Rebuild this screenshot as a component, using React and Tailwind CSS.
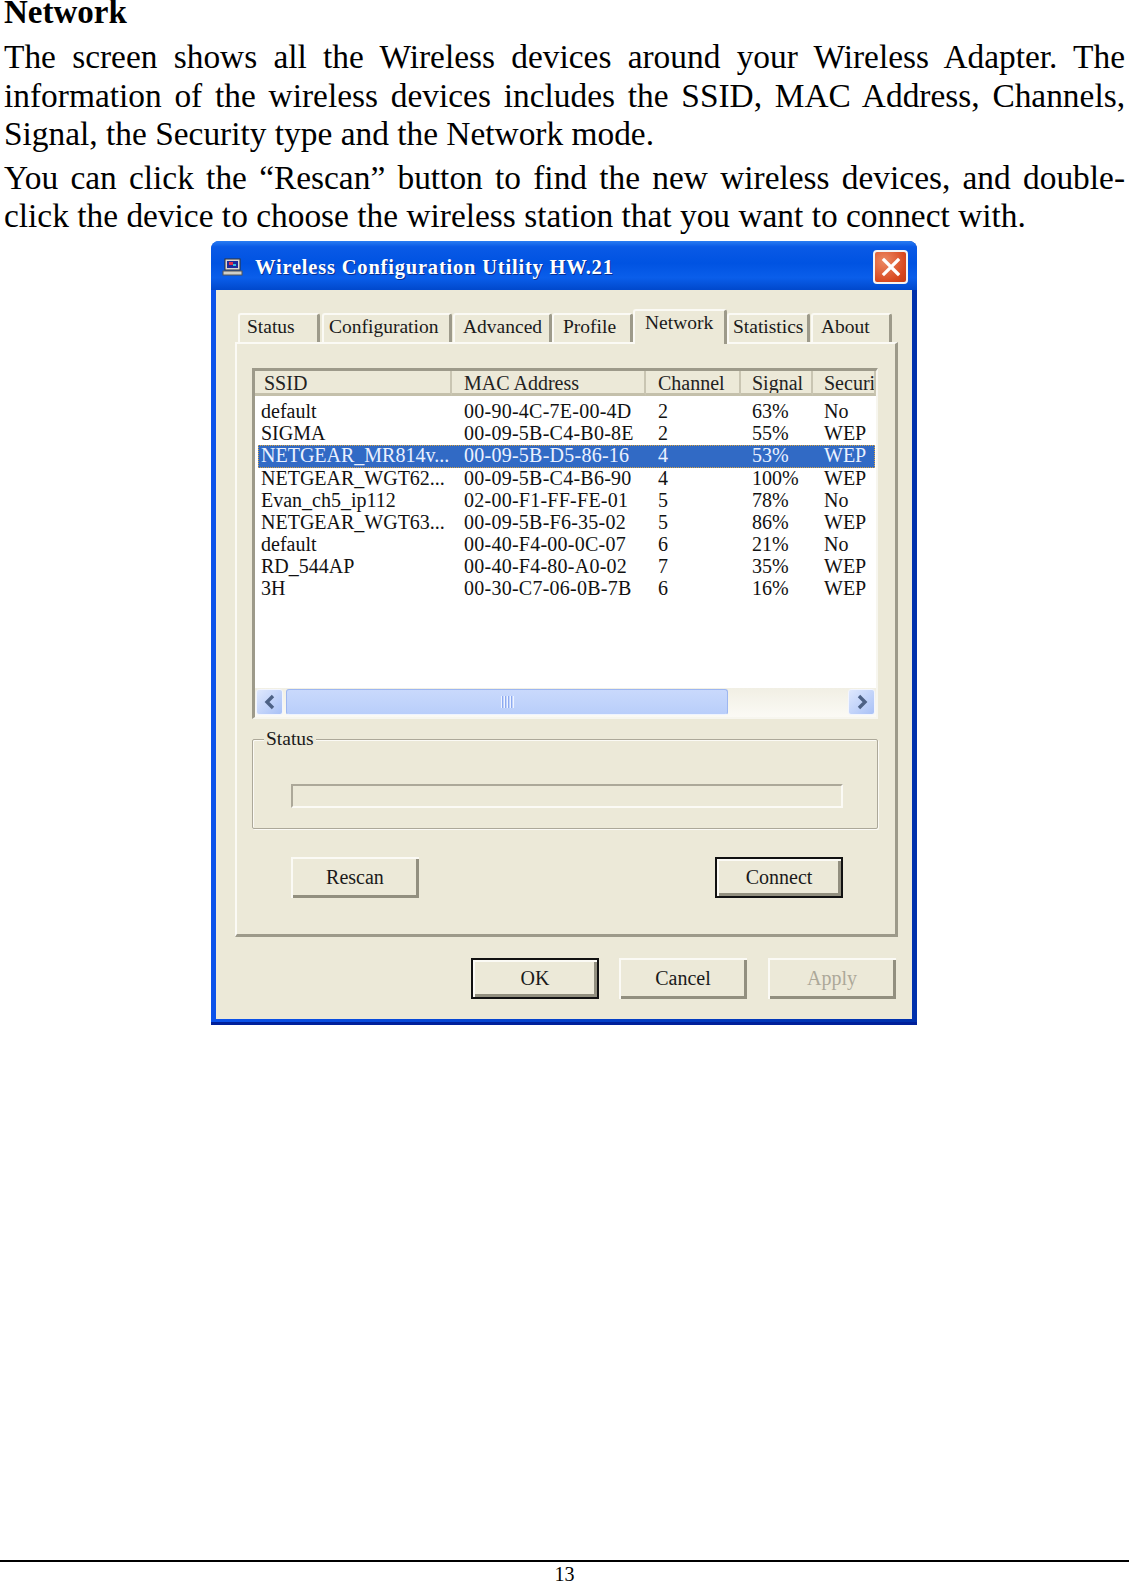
import React from "react";

const rows = [
  ["default", "00-90-4C-7E-00-4D", "2", "63%", "No"],
  ["SIGMA", "00-09-5B-C4-B0-8E", "2", "55%", "WEP"],
  ["NETGEAR_MR814v...", "00-09-5B-D5-86-16", "4", "53%", "WEP"],
  ["NETGEAR_WGT62...", "00-09-5B-C4-B6-90", "4", "100%", "WEP"],
  ["Evan_ch5_ip112", "02-00-F1-FF-FE-01", "5", "78%", "No"],
  ["NETGEAR_WGT63...", "00-09-5B-F6-35-02", "5", "86%", "WEP"],
  ["default", "00-40-F4-00-0C-07", "6", "21%", "No"],
  ["RD_544AP", "00-40-F4-80-A0-02", "7", "35%", "WEP"],
  ["3H", "00-30-C7-06-0B-7B", "6", "16%", "WEP"],
];

const tabs = [
  { label: "Status", w: "w-[82px]", pl: "pl-[7px]", mr: "mr-[2px]" },
  { label: "Configuration", w: "w-[130px]", pl: "pl-[5px]", mr: "mr-[1px]" },
  { label: "Advanced", w: "w-[99px]", pl: "pl-[8px]", mr: "" },
  { label: "Profile", w: "w-[81px]", pl: "pl-[9px]", mr: "" },
  { label: "Network", w: "w-[94px]", pl: "pl-[10px]", mr: "", active: true },
  { label: "Statistics", w: "w-[83px]", pl: "pl-[4px]", mr: "mr-[1px]" },
  { label: "About", w: "w-[81px]", pl: "pl-[8px]", mr: "" },
];

function Tab({ label, w, pl, mr, active }) {
  return (
    <div
      className={`${w} ${pl} ${mr} ${active ? "h-[35px] -mb-[2px] pt-[1px] leading-[22px] relative z-10" : "h-[29px] leading-[24px]"} shrink-0 bg-[#ece9d8] rounded-t-[3px] border-t-2 border-l-2 border-r-[3px] border-t-[#fbfaf5] border-l-[#fbfaf5] border-r-[#9d9a8a] text-[19.5px] text-[#1a1a1a] whitespace-nowrap`}
    >
      {label}
    </div>
  );
}

function HeadCell({ children, w, pl }) {
  return (
    <div className={`${w} ${pl} shrink-0 h-[25px] leading-[24px] overflow-hidden whitespace-nowrap border-r-2 border-r-[#c9c5b2] border-b-[3px] border-b-[#c4c0ab] text-[#222]`}>
      {children}
    </div>
  );
}

function Btn({ children, primary, disabled }) {
  return (
    <div
      className={`w-[128px] h-[41px] flex items-center justify-center bg-[#ece9d8] text-[20px] leading-none shadow-[inset_2px_2px_0_#fbfaf5,inset_-3px_-3px_0_#928f7f] ${primary ? "border-2 border-[#111]" : ""} ${disabled ? "text-[#aca899]" : "text-[#1a1a1a]"}`}
    >
      {children}
    </div>
  );
}

function ScrollButton({ dir }) {
  return (
    <div className="w-[27px] h-[26px] shrink-0 rounded-[3px] bg-gradient-to-br from-[#dfe8fd] to-[#a9c1f6] border border-[#f2f5fe] flex items-center justify-center">
      <svg width="14" height="16" viewBox="0 0 14 16">
        <path
          d={dir === "left" ? "M10 2 L4 8 L10 14" : "M4 2 L10 8 L4 14"}
          fill="none"
          stroke="#4d6185"
          strokeWidth="3.4"
        />
      </svg>
    </div>
  );
}

export default function App() {
  return (
    <div className="w-[1129px] h-[1582px] overflow-hidden bg-white text-black flex flex-col font-['Liberation_Serif',serif]">
      <div className="px-[4px]">
        <h1 className="font-bold text-[33px] leading-[25px]">Network</h1>
        <p className="mt-[13px] text-[33.4px] leading-[38.6px] text-justify">
          The screen shows all the Wireless devices around your Wireless Adapter. The information of the wireless devices includes the SSID, MAC Address, Channels, Signal, the Security type and the Network mode.
        </p>
        <p className="mt-[5px] text-[33.4px] leading-[38.6px] text-justify">
          You can click the “Rescan” button to find the new wireless devices, and double-click the device to choose the wireless station that you want to connect with.
        </p>
      </div>

      <div className="mt-[5px] ml-[211px] w-[706px] h-[784px] shrink-0 flex flex-col rounded-t-[8px] overflow-hidden bg-gradient-to-r from-[#0b52ea] to-[#0030ac] shadow-[inset_0_-3px_0_#00209a]">
        <div className="h-[49px] shrink-0 pl-[11px] pr-[9px] flex items-center bg-[linear-gradient(180deg,#2a7df2_0%,#0a5ae6_12%,#0053e2_45%,#0a5eea_75%,#0048cc_100%)]">
          <svg width="21" height="18" viewBox="0 0 21 18" className="shrink-0 mt-[4px]">
            <rect x="3" y="1" width="15" height="11" fill="#d8d8d8" stroke="#333" />
            <rect x="5" y="3" width="11" height="7" fill="#1b2a9c" />
            <rect x="7" y="4" width="4" height="3" fill="#e0304a" />
            <rect x="11" y="6" width="3" height="2" fill="#35c0e0" />
            <rect x="1" y="13" width="19" height="4" fill="#cfcfc8" stroke="#555" />
          </svg>
          <div className="ml-[12px] mt-[4px] flex-1 font-bold text-[20.5px] tracking-[0.8px] leading-none text-white whitespace-nowrap [text-shadow:1px_1px_0_#0a2f90]">
            Wireless Configuration Utility HW.21
          </div>
          <div className="w-[35px] h-[34px] shrink-0 mt-[4px] rounded-[4px] border-2 border-[#f4f4f4] bg-[radial-gradient(circle_at_30%_30%,#ec8a64,#d8481f_70%,#c63c16)] flex items-center justify-center">
            <svg width="20" height="20" viewBox="0 0 20 20">
              <path d="M3 3 L17 17 M17 3 L3 17" stroke="#fff" strokeWidth="3.2" strokeLinecap="square" />
            </svg>
          </div>
        </div>

        <div className="mx-[5px] mb-[6px] flex-1 bg-[#ece9d8] pl-[19px] pr-[14px] pt-[19px] text-[20px]">
          <div className="h-[33px] pl-[3px] flex items-end">
            {tabs.map((t) => (
              <Tab key={t.label} {...t} />
            ))}
          </div>

          <div className="w-[663px] h-[595px] border-2 border-t-[#fbfaf5] border-l-[#fbfaf5] border-r-[3px] border-b-[3px] border-r-[#9d9a8a] border-b-[#9d9a8a] pl-[15px] pt-[24px]">
            <div className="w-[626px] h-[351px] border-t-[3px] border-l-[3px] border-r-2 border-b-2 border-t-[#9d9a8a] border-l-[#9d9a8a] border-r-[#f7f6ef] border-b-[#f7f6ef] flex flex-col">
              <div className="flex shrink-0 bg-[#ece9d8]">
                <HeadCell w="w-[197px]" pl="pl-[9px]">SSID</HeadCell>
                <HeadCell w="w-[194px]" pl="pl-[12px]">MAC Address</HeadCell>
                <HeadCell w="w-[95px]" pl="pl-[12px]">Channel</HeadCell>
                <HeadCell w="w-[72px]" pl="pl-[11px]">Signal</HeadCell>
                <HeadCell w="w-[63px]" pl="pl-[11px]">Security</HeadCell>
              </div>
              <div className="flex-1 bg-white pt-[5px] overflow-hidden">
                {rows.map((r, i) => {
                  const sel = i === 2;
                  return (
                    <div
                      key={i}
                      className={`ml-[3px] mr-[1px] h-[22.2px] leading-[20px] grid grid-cols-[194px_194px_95px_72px_63px] whitespace-nowrap ${sel ? "bg-[#316ac5] text-[#eaf1ff] outline-1 -outline-offset-1 outline-dotted outline-[#d9a441]" : "text-[#111]"}`}
                    >
                      <div className="pl-[3px] overflow-hidden">{r[0]}</div>
                      <div className="pl-[12px] tracking-[0.25px]">{r[1]}</div>
                      <div className="pl-[12px]">{r[2]}</div>
                      <div className="pl-[11px]">{r[3]}</div>
                      <div className="pl-[11px]">{r[4]}</div>
                    </div>
                  );
                })}
              </div>
              <div className="h-[29px] shrink-0 flex items-center pl-[1px] pr-[1px] bg-gradient-to-b from-[#f1efe4] to-[#fbfaf5]">
                <ScrollButton dir="left" />
                <div className="ml-[3px] w-[442px] h-[26px] rounded-[3px] border border-[#9db6f0] border-b-[#eef3ff] bg-gradient-to-b from-[#c9d9fc] to-[#b9cefa] flex items-center justify-center">
                  <svg width="14" height="12" viewBox="0 0 14 12">
                    <path d="M1.5 0V12M4.5 0V12M7.5 0V12M10.5 0V12M13.5 0V12" stroke="#eef3ff" strokeWidth="1" />
                    <path d="M2.5 0V12M5.5 0V12M8.5 0V12M11.5 0V12" stroke="#8eaaf0" strokeWidth="1" />
                  </svg>
                </div>
                <div className="flex-1" />
                <ScrollButton dir="right" />
              </div>
            </div>

            <div className="mt-[20px] w-[626px] h-[90px] border border-[#aca899] shadow-[inset_1px_1px_0_#fbfaf5,1px_1px_0_#fbfaf5] rounded-[2px]">
              <span className="block w-fit ml-[11px] -mt-[13px] px-[2px] bg-[#ece9d8] text-[19.5px] leading-[24px] text-[#1a1a1a]">Status</span>
              <div className="ml-[38px] mt-[33px] w-[552px] h-[24px] border-t-2 border-l-2 border-t-[#aca899] border-l-[#aca899] border-r-[#fbfaf5] border-b-[#fbfaf5] border-b-2 border-r-2" />
            </div>

            <div className="mt-[28px] ml-[39px] w-[552px] flex justify-between">
              <Btn>Rescan</Btn>
              <Btn primary>Connect</Btn>
            </div>
          </div>

          <div className="mt-[21px] w-[661px] flex justify-end gap-[21px]">
            <div className="-mr-[1px]">
              <Btn primary>OK</Btn>
            </div>
            <Btn>Cancel</Btn>
            <Btn disabled>Apply</Btn>
          </div>
        </div>
      </div>

      <div className="mt-auto border-t-2 border-black h-[22px] text-center text-[20px] leading-[24px]">13</div>
    </div>
  );
}
